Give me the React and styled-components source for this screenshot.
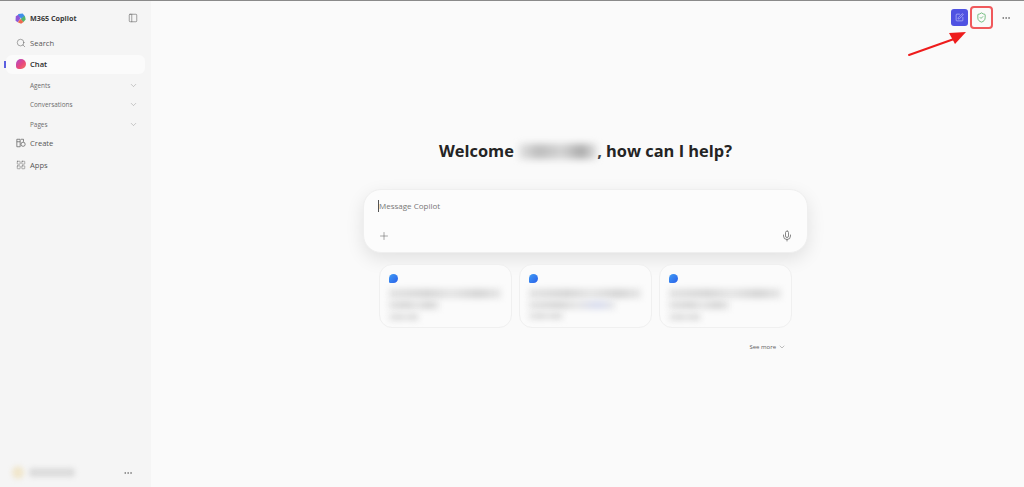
import React from 'react';
import styled, { createGlobalStyle } from 'styled-components';
import { ChevronDown, Search, PanelLeft, Plus, Mic, LayoutGrid, Ellipsis, SquarePen, ShieldCheck } from 'lucide-react';

const GlobalStyle = createGlobalStyle`
  html, body {
    margin: 0;
    height: 100%;
    overflow: hidden;
  }
  body {
    font-family: "Open Sans", "Noto Sans", "Liberation Sans", sans-serif;
    color: #242424;
  }
  #root {
    height: 100%;
  }
`;

const Page = styled.div`
  display: flex;
  height: 487px;
  width: 1024px;
  border-top: 1px solid #8a8a8a;
  box-sizing: border-box;
  position: relative;
  overflow: hidden;
  background: #fafafa;
`;

const Sidebar = styled.aside`
  width: 151px;
  flex: none;
  background: #f5f5f5;
  display: flex;
  flex-direction: column;
  padding: 8px 6px 0;
  box-sizing: border-box;
`;

const Brand = styled.div`
  height: 18px;
  display: flex;
  align-items: center;
  padding: 0 7px 0 9px;
  margin-bottom: 4.5px;
  font-size: 7.2px;
  font-weight: 700;
  color: #3a3a3a;

  span {
    margin-left: 4px;
    flex: 1;
  }
`;

const NavRow = styled.div`
  position: relative;
  display: flex;
  align-items: center;
  height: ${(p) => p.$h || 20}px;
  padding: 0 9px 0 10px;
  border-radius: 6px;
  font-size: 7.6px;
  font-weight: ${(p) => (p.$active ? 600 : 400)};
  color: ${(p) => (p.$active ? '#2a2a2a' : '#555')};
  background: ${(p) => (p.$active ? '#fbfbfb' : 'transparent')};
  svg.nav-icon {
    color: #616161;
  }
  span {
    margin-left: 4px;
  }
`;

const ActiveBar = styled.i`
  position: absolute;
  left: -2px;
  top: 6px;
  width: 2px;
  height: 7px;
  background: #5b5fe0;
`;

const SubRows = styled.div`
  margin-top: 2px;
`;

const SubRow = styled.div`
  display: flex;
  align-items: center;
  justify-content: space-between;
  height: 19.5px;
  padding: 0 7px 0 24px;
  font-size: 6.4px;
  color: #6b6b6b;
  svg {
    color: #8a8a8a;
  }
`;

const ChatDot = styled.i`
  width: 10px;
  height: 10px;
  border-radius: 50% 50% 50% 30%;
  background: linear-gradient(135deg, #a84bd0 0%, #e8487e 55%, #f4795a 100%);
`;

const Footer = styled.div`
  margin-top: auto;
  height: 17px;
  margin-bottom: 6px;
  padding: 0 12px 0 6px;
  display: flex;
  align-items: center;
  justify-content: space-between;
  color: #666;
`;

const FooterBlur = styled.div`
  display: flex;
  align-items: center;
  gap: 5px;
  filter: blur(2.5px);
`;

const Avatar = styled.i`
  width: 12px;
  height: 13px;
  border-radius: 50%;
  background: #f0e6cc;
`;

const NameBlock = styled.i`
  width: 46px;
  height: 9px;
  border-radius: 4px;
  background: #dcdcdc;
`;

const Main = styled.main`
  flex: 1;
  position: relative;
  display: flex;
  flex-direction: column;
  align-items: center;
  padding-right: 4px;
`;

const Toolbar = styled.div`
  align-self: stretch;
  margin-right: -4px;
  height: 34px;
  padding: 5px 13px 0 0;
  display: flex;
  justify-content: flex-end;
  align-items: flex-start;
`;

const NewChatButton = styled.div`
  width: 17px;
  height: 17px;
  margin-top: 3px;
  border-radius: 3px;
  background: #4f52e2;
  color: #dfe1ff;
  display: flex;
  align-items: center;
  justify-content: center;
`;

const ShieldBox = styled.div`
  width: 23px;
  height: 23px;
  margin-left: 2px;
  box-sizing: border-box;
  border: 2px solid #f0595c;
  border-radius: 4px;
  color: #2f9e44;
  display: flex;
  align-items: center;
  justify-content: center;
`;

const MoreButton = styled.div`
  width: 10px;
  height: 23px;
  margin-left: 8px;
  color: #555;
  display: flex;
  align-items: center;
  justify-content: center;
`;

const Arrow = styled.svg`
  position: absolute;
  left: 755px;
  top: 28px;
  width: 70px;
  height: 32px;
`;

const Welcome = styled.h1`
  margin: 100px 0 0;
  height: 22px;
  display: flex;
  align-items: center;
  font-size: 16.4px;
  font-weight: 700;
  line-height: 22px;
  color: #242424;
  white-space: pre;
`;

const BlurName = styled.i`
  width: 78px;
  height: 15px;
  margin: 0 0 0 1px;
  background: linear-gradient(90deg, #e2e2e2, #bcbcbc 25%, #d4d4d4 55%, #aaaaaa 80%, #e2e2e2);
  filter: blur(3.5px);
`;

const Composer = styled.div`
  width: 445px;
  height: 64px;
  margin-top: 27px;
  box-sizing: border-box;
  padding: 10px 14px 10px;
  border: 1px solid #efefef;
  border-radius: 18px;
  background: #fcfcfc;
  box-shadow: 0 6px 18px rgba(0, 0, 0, 0.1);
  display: flex;
  flex-direction: column;
  justify-content: space-between;
`;

const Placeholder = styled.div`
  font-size: 8px;
  line-height: 12px;
  color: #777;
  border-left: 1px solid #555;
`;

const ComposerActions = styled.div`
  display: flex;
  justify-content: space-between;
  align-items: center;
  color: #616161;
`;

const Suggestions = styled.div`
  width: 413px;
  display: flex;
  flex-direction: column;
`;

const Cards = styled.div`
  display: flex;
  gap: 7px;
  margin-top: 11px;
`;

const Card = styled.div`
  width: 133px;
  height: 64px;
  box-sizing: border-box;
  padding: 9px 9px 0;
  border: 1px solid #f0f0f0;
  border-radius: 13px;
  background: #fbfbfb;
`;

const BubbleIcon = styled.div`
  width: 9px;
  height: 9px;
  margin-bottom: 6px;
  border-radius: 50% 50% 50% 15%;
  background: linear-gradient(135deg, #3f9cf5, #2a5fe8);
`;

const BlurLine = styled.div`
  height: ${(p) => p.$h}px;
  width: ${(p) => p.$w}px;
  margin-bottom: ${(p) => p.$gap}px;
  background: linear-gradient(90deg, #e2e2e2, #d4d4d4 35%, #e4e4e4 55%, ${(p) => p.$c || '#d2d2d2'} 80%, #e6e6e6);
  filter: blur(3px);
`;

const SeeMore = styled.div`
  align-self: flex-end;
  margin: 15px 6px 0 0;
  display: flex;
  align-items: center;
  gap: 2px;
  font-size: 6px;
  color: #616161;
`;

const CreateIcon = () => (
  <svg className="nav-icon" width="10" height="10" viewBox="0 0 12 12" fill="none" stroke="currentColor" strokeWidth="0.9">
    <path d="M1 1.5h4v9H1zM1 4.5h4" />
    <circle cx="8.5" cy="7.5" r="2.5" />
    <path d="M6 1.5h3v3" />
  </svg>
);

const LogoIcon = () => (
  <svg width="11" height="11" viewBox="0 0 10 10">
    <path d="M3 0.8L7 0.5 9 3 6 5 2.5 3z" fill="#3f8fe8" />
    <path d="M0.7 3L3 1.5 5 5 2.5 8.5 0.5 7z" fill="#8f58d8" />
    <path d="M9 2.5L9.7 6 7.5 8.5 5 5.5z" fill="#52b56c" />
    <path d="M2.5 8.5L5 5.5 7.8 8.2 5.5 9.7z" fill="#ee6a50" />
  </svg>
);

// blurred suggestion text, one entry per line: width, height, gap below, end tint
const suggestions = [
  [[112, 9, 3], [50, 8, 5], [30, 6, 0]],
  [[112, 9, 3], [86, 8, 4, '#d6daee'], [34, 6, 0]],
  [[112, 9, 3], [60, 8, 5], [32, 6, 0]],
];

export default function App() {
  return (
    <>
      <GlobalStyle />
      <Page>
        <Sidebar>
          <Brand>
            <LogoIcon />
            <span>M365 Copilot</span>
            <PanelLeft size={10} color="#616161" strokeWidth={1.4} />
          </Brand>
          <NavRow $h={23}>
            <Search className="nav-icon" size={10} strokeWidth={1.3} />
            <span>Search</span>
          </NavRow>
          <NavRow $active $h={19}>
            <ActiveBar />
            <ChatDot />
            <span>Chat</span>
          </NavRow>
          <SubRows>
            <SubRow>Agents<ChevronDown size={9} strokeWidth={1.2} /></SubRow>
            <SubRow>Conversations<ChevronDown size={9} strokeWidth={1.2} /></SubRow>
            <SubRow>Pages<ChevronDown size={9} strokeWidth={1.2} /></SubRow>
          </SubRows>
          <NavRow $h={17}>
            <CreateIcon />
            <span>Create</span>
          </NavRow>
          <NavRow $h={28}>
            <LayoutGrid className="nav-icon" size={10} strokeWidth={1.2} />
            <span>Apps</span>
          </NavRow>
          <Footer>
            <FooterBlur>
              <Avatar />
              <NameBlock />
            </FooterBlur>
            <Ellipsis size={10} strokeWidth={1.6} />
          </Footer>
        </Sidebar>
        <Main>
          <Toolbar>
            <NewChatButton><SquarePen size={9} strokeWidth={1.4} /></NewChatButton>
            <ShieldBox><ShieldCheck size={11} strokeWidth={1.4} /></ShieldBox>
            <MoreButton><Ellipsis size={10} strokeWidth={1.6} /></MoreButton>
          </Toolbar>
          <Arrow viewBox="0 0 70 32">
            <path d="M3 26L48 10" stroke="#ee1c1c" strokeWidth="2" strokeLinecap="round" />
            <path d="M60 3L43 4 49 15z" fill="#ee1c1c" />
          </Arrow>
          <Welcome>Welcome <BlurName />, how can I help?</Welcome>
          <Composer>
            <Placeholder>Message Copilot</Placeholder>
            <ComposerActions>
              <Plus size={12} strokeWidth={1.1} />
              <Mic size={12} strokeWidth={1.5} />
            </ComposerActions>
          </Composer>
          <Suggestions>
            <Cards>
              {suggestions.map((lines, i) => (
                <Card key={i}>
                  <BubbleIcon />
                  {lines.map(([w, h, gap, c], j) => (
                    <BlurLine key={j} $w={w} $h={h} $gap={gap} $c={c} />
                  ))}
                </Card>
              ))}
            </Cards>
            <SeeMore>See more <ChevronDown size={8} strokeWidth={1.2} /></SeeMore>
          </Suggestions>
        </Main>
      </Page>
    </>
  );
}
